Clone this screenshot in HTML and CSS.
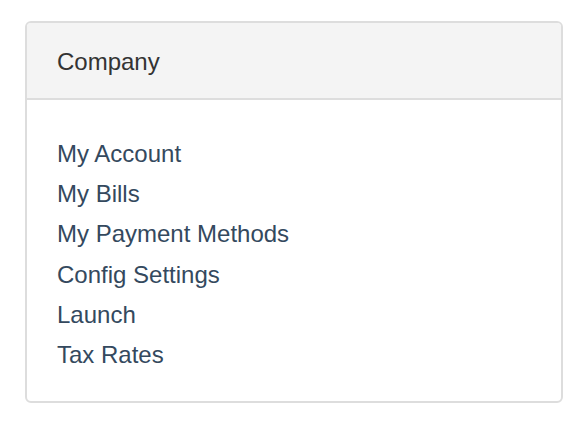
FILE: index.html
```html
<!DOCTYPE html>
<html>
<head>
<meta charset="utf-8">
<link rel="stylesheet" href="styles.css">
</head>
<body>
<div class="panel">
  <div class="panel-heading">Company</div>
  <div class="panel-body">
    <ul class="links">
      <li><a href="#">My Account</a></li>
      <li><a href="#">My Bills</a></li>
      <li><a href="#">My Payment Methods</a></li>
      <li><a href="#">Config Settings</a></li>
      <li><a href="#">Launch</a></li>
      <li><a href="#">Tax Rates</a></li>
    </ul>
  </div>
</div>
</body>
</html>
```
FILE: styles.css
```css
html, body {
  margin: 0;
  padding: 0;
  background: #fff;
}
body {
  padding: 21px 22px 0 25px;
  font-family: "Liberation Sans", Arial, sans-serif;
}
.panel {
  width: 538px;
  box-sizing: border-box;
  border: 2px solid #dddddd;
  border-radius: 6px;
  overflow: hidden;
}
.panel-heading {
  background: #f4f4f4;
  border-bottom: 2px solid #dddddd;
  padding: 22px 30px 20px 30px;
  line-height: 33px;
  font-size: 24px;
  color: #333333;
}
.panel-body {
  padding: 34px 30px 26px 30px;
}
.links {
  list-style: none;
  margin: 0;
  padding: 0;
}
.links li {
  line-height: 40.2px;
  font-size: 24px;
}
.links a {
  color: #34495e;
  text-decoration: none;
}
```
